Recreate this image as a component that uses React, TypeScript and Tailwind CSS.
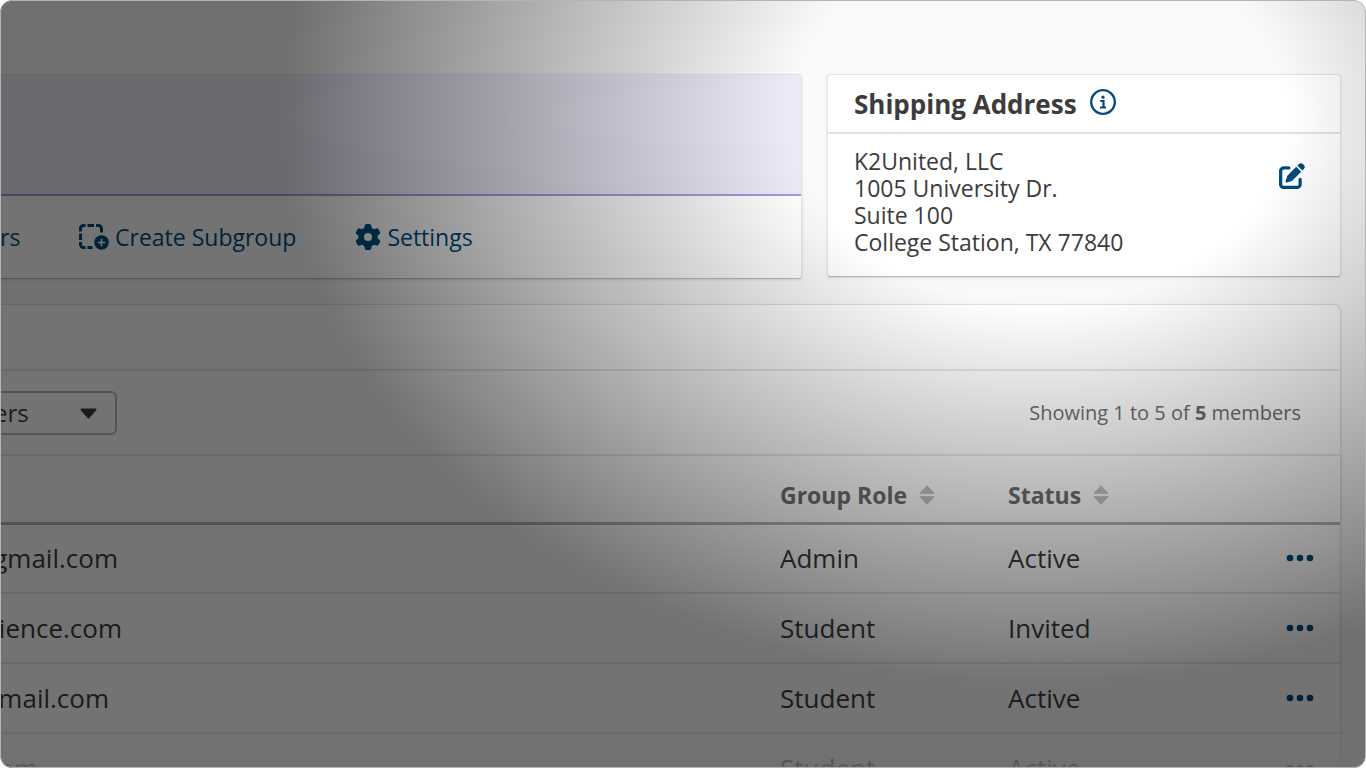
import React from 'react';
import { FaGear, FaPenToSquare } from 'react-icons/fa6';

interface Member {
  email: string;
  emailWidth: number; // visible part of the scrolled column
  role: string;
  status: string;
}

const MEMBERS: Member[] = [
  { email: 'gmail.com', emailWidth: 118, role: 'Admin', status: 'Active' },
  { email: 'ience.com', emailWidth: 122, role: 'Student', status: 'Invited' },
  { email: 'mail.com', emailWidth: 109, role: 'Student', status: 'Active' },
  { email: 'om', emailWidth: 38, role: 'Student', status: 'Active' },
];

const ADDRESS = ['K2United, LLC', '1005 University Dr.', 'Suite 100', 'College Station, TX 77840'];

const SubgroupIcon = () => (
  <svg className="h-[26px] w-[30px]" viewBox="0 0 30 26" fill="none" aria-hidden="true">
    <path
      d="M1.500 7.500V4.500a3 3 0 0 1 3-3H6.500M8.500 1.500h6.500M17 1.500h2.500a3 3 0 0 1 3 3V8.500M1.500 9.500v6.500M1.500 18v2.500a3 3 0 0 0 3 3H6.500M8.500 23.500h5"
      stroke="currentColor"
      strokeWidth="3"
    />
    <circle cx="22.500" cy="18.500" r="7.300" fill="currentColor" />
    <path d="M22.500 14.800v7.400M18.800 18.500h7.400" stroke="white" strokeWidth="1.600" />
  </svg>
);

const InfoIcon = () => (
  <svg className="size-[26px]" viewBox="0 0 26 26" fill="none" aria-hidden="true">
    <circle cx="13" cy="13" r="11.800" stroke="currentColor" strokeWidth="2.300" />
    <circle cx="13" cy="8.200" r="1.600" fill="currentColor" />
    <path d="M10.300 12h3.200v6.500M10 18.500h6" stroke="currentColor" strokeWidth="2.200" />
  </svg>
);

const SortIcon = () => (
  <svg className="h-5 w-4" viewBox="0 0 16 20" fill="#c4c4c4" stroke="#c4c4c4" strokeLinejoin="round" aria-hidden="true">
    <path d="M8 .8 15 8.300H1Z" />
    <path d="M8 19.200 1 11.700h14Z" />
  </svg>
);

const CaretIcon = () => (
  <svg
    className="pointer-events-none mt-0.5 h-[11px] w-[17px]"
    viewBox="0 0 17 11"
    fill="currentColor"
    stroke="currentColor"
    strokeWidth="2"
    strokeLinejoin="round"
    aria-hidden="true"
  >
    <path d="M1.500 1.500h14L8.500 9.500Z" />
  </svg>
);

const DotsIcon = () => (
  <svg className="h-2 w-7" viewBox="0 0 28 8" fill="currentColor" aria-hidden="true">
    <circle cx="4" cy="4" r="3.300" />
    <circle cx="14" cy="4" r="3.300" />
    <circle cx="24" cy="4" r="3.300" />
  </svg>
);

const GroupCard = () => (
  <section className="flex-1 overflow-hidden rounded-r border border-l-0 border-[#e4e4e4] border-b-[#bdbdbd] bg-white shadow-sm">
    <div className="h-[121px] border-b-2 border-[#a59be0] bg-[#eceaf9]" />
    <nav className="flex h-[82px] items-center text-[23px] text-[#004b7c]">
      <a href="#members" className="w-[79px]">rs</a>
      <a href="#subgroup" className="flex items-center gap-1.5">
        <SubgroupIcon />
        Create Subgroup
      </a>
      <a href="#settings" className="ml-[59px] flex items-center gap-1.5">
        <FaGear className="size-[26px]" />
        Settings
      </a>
    </nav>
  </section>
);

const ShippingCard = () => (
  <section className="w-[514px] self-start rounded border border-[#e4e4e4] border-b-[#bdbdbd] bg-white shadow-sm">
    <header className="flex h-[59px] items-center gap-[13px] border-b-2 border-[#e2e2e2] px-[26px]">
      <h2 className="pt-0.5 text-[26px] font-bold">Shipping Address</h2>
      <button type="button" aria-label="About the shipping address" className="mb-1 text-[#004b7c]">
        <InfoIcon />
      </button>
    </header>
    <div className="flex items-start justify-between pt-3.5 pr-[35px] pb-5 pl-[26px]">
      <address className="text-[23px] leading-[27px] not-italic">
        {ADDRESS.map((line) => (
          <div key={line}>{line}</div>
        ))}
      </address>
      <button type="button" aria-label="Edit address" className="mt-[15px] text-[#004b7c]">
        <FaPenToSquare className="size-[26px]" />
      </button>
    </div>
  </section>
);

const MembersPanel = () => (
  <section className="rounded-tr-lg border border-l-0 border-[#e0e0e0] bg-white shadow-sm">
    <div className="h-[66px] border-b-2 border-[#e8e8e8]" />
    <div className="flex h-[85px] items-center justify-between border-b-2 border-[#e8e8e8] pr-[39px]">
      <div className="flex h-11 w-[117px] items-center rounded-r-md border-2 border-l-0 border-[#bababa] pr-[18px]">
        <select aria-label="Filter members" className="-ml-1.5 min-w-0 flex-1 appearance-none text-2xl outline-none">
          <option>ers</option>
        </select>
        <CaretIcon />
      </div>
      <p className="text-xl text-[#6e6e6e]">
        Showing 1 to 5 of <b>5</b> members
      </p>
    </div>
    <table className="w-full table-fixed text-left text-[26px]">
      <thead>
        <tr className="h-[67px] border-b-3 border-[#b5b5b5] text-[23px] text-[#6e6e6e]">
          <th aria-label="Email" />
          {['Group Role', 'Status'].map((label) => (
            <th key={label} className="w-[228px] pt-3">
              <button type="button" className="flex items-center gap-3">
                {label}
                <SortIcon />
              </button>
            </th>
          ))}
          <th aria-label="Actions" className="w-[104px]" />
        </tr>
      </thead>
      <tbody>
        {MEMBERS.map((member, i) => (
          <tr key={i} className="h-[70px] border-b-2 border-[#e8e8e8]">
            <td>
              <div className="flex justify-end" style={{ width: member.emailWidth }}>
                {member.email}
              </div>
            </td>
            <td>{member.role}</td>
            <td>{member.status}</td>
            <td className="pr-[26px]">
              <button type="button" aria-label="Member actions" className="ml-auto block text-[#004b7c]">
                <DotsIcon />
              </button>
            </td>
          </tr>
        ))}
      </tbody>
    </table>
  </section>
);

const App: React.FC = () => {
  return (
    <div className="h-screen bg-white font-['Open_Sans',sans-serif] text-[#3c3c3c]">
      <div className="relative h-full overflow-hidden rounded-xl bg-[#f9f9f9]">
        <main className="flex flex-col gap-[25px] pt-[74px] pr-[25px]">
          <div className="flex gap-[25px]">
            <GroupCard />
            <ShippingCard />
          </div>
          <MembersPanel />
        </main>
        {/* fade out the last row */}
        <div className="pointer-events-none absolute inset-x-0 bottom-0 h-14 bg-linear-to-b from-transparent to-[#f9f9f9]/75" />
        {/* spotlight on the shipping card */}
        <div className="pointer-events-none absolute inset-0 rounded-xl bg-[radial-gradient(55.3%_74%_at_76%_15%,transparent_33%,rgba(0,0,0,0.55)_100%)]" />
        <div className="pointer-events-none absolute inset-0 rounded-xl border border-[#b4b4b4]" />
      </div>
    </div>
  );
};

export default App;
